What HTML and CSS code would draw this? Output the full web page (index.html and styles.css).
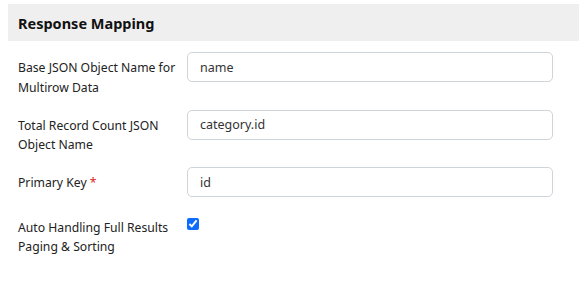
FILE: index.html
```html
<!DOCTYPE html>
<html lang="en">
<head>
 <meta charset="UTF-8" />
 <title>Response Mapping</title>
 <link rel="stylesheet" href="styles.css">
</head>
<body>
 <!-- Response mapping section -->
 <section class="panel">
   <header class="panel-head">
     <h2>Response Mapping</h2>
   </header>

   <form class="panel-body">
     <div class="field tall">
       <label for="base">Base JSON Object Name for Multirow Data</label>
       <input id="base" type="text" value="name">
     </div>
     <div class="field tall">
       <label for="count">Total Record Count JSON Object Name</label>
       <input id="count" type="text" value="category.id">
     </div>
     <div class="field">
       <label for="pk">Primary Key <span class="req">*</span></label>
       <input id="pk" type="text" value="id">
     </div>
     <div class="field switch">
       <label for="auto">Auto Handling Full Results Paging &amp; Sorting</label>
       <div class="check"><input id="auto" type="checkbox" checked></div>
     </div>
   </form>
 </section>
</body>
</html>
```

FILE: styles.css
```css
/* Reset */
* {
  margin: 0;
  padding: 0;
  box-sizing: border-box;
}
body {
  font-family: "Noto Sans", "Open Sans", Arial, sans-serif;
  color: #212529;
  background: #fff;
  padding: 4px 0 0 8px;
}
/* Section header bar */
.panel-head {
  background: #efefef;
  height: 37px;
  display: flex;
  align-items: center;
  padding-left: 10px;
}
.panel-head h2 {
  font-size: 14.5px;
  font-weight: 700;
  color: #111;
}
/* Form rows: label column + control column */
.panel-body {
  padding: 11px 0 0 10px;
}
.field {
  display: grid;
  grid-template-columns: 169px 366px;
  align-items: start;
  height: 51px;
}
.field.tall {
  height: 57.5px;
}
.field label {
  font-size: 12.2px;
  line-height: 19.5px;
  padding-top: 6px;
  color: #222;
}
.field.switch label {
  padding-top: 0;
  line-height: 19px;
}
.req {
  color: #e02424;
}
.field input[type="text"] {
  height: 30px;
  width: 100%;
  border: 1px solid #ced4da;
  border-radius: 5px;
  padding: 0 12px;
  font: inherit;
  font-size: 12.5px;
  color: #333;
  outline: none;
}
.check input {
  width: 12px;
  height: 12px;
  accent-color: #0b6cfd;
  display: block;
}
```
